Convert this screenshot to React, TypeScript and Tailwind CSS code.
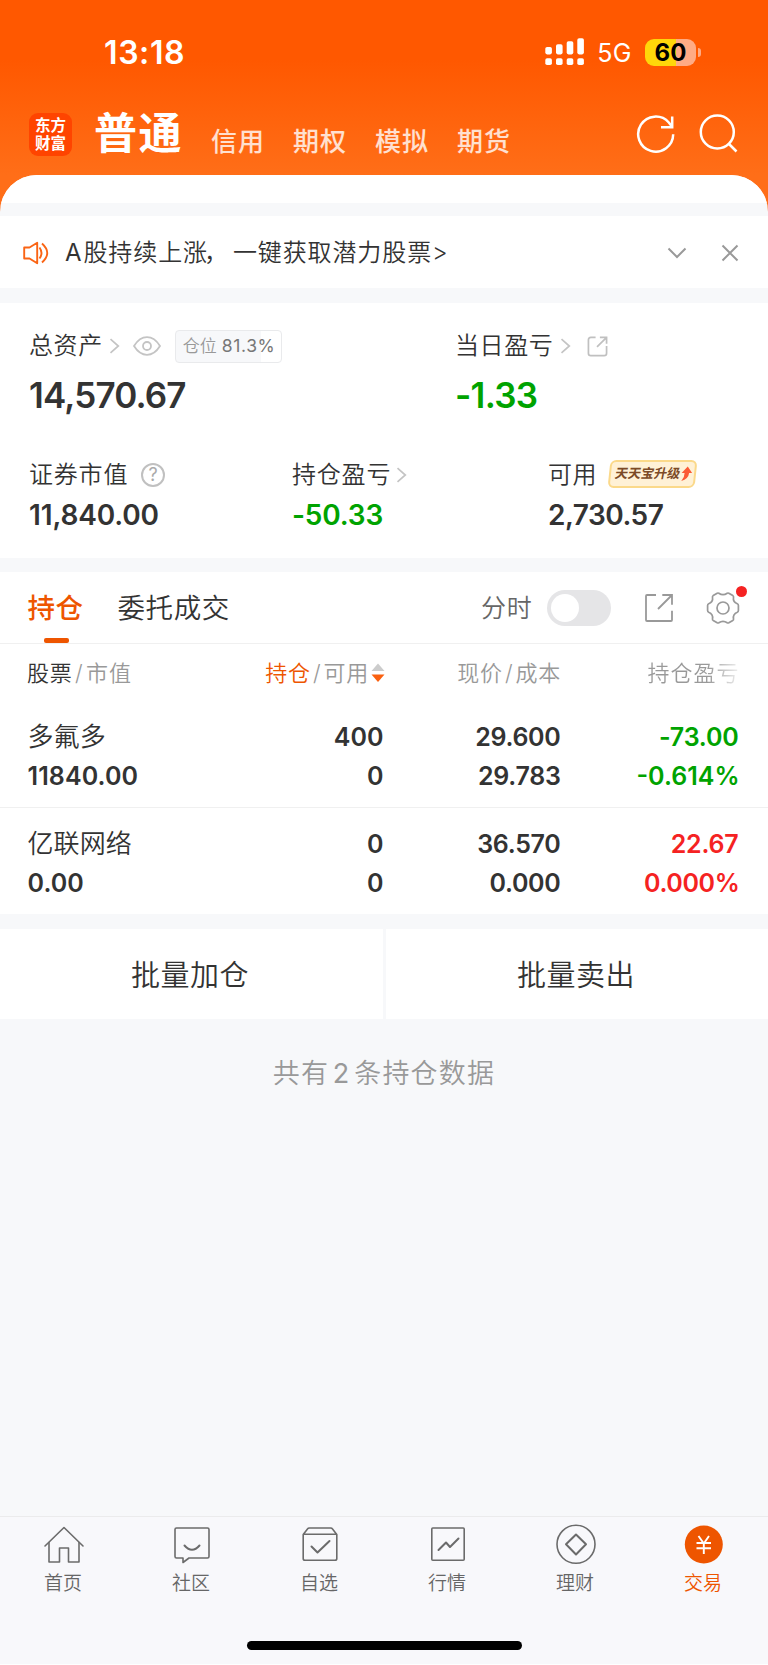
import React from "react";

const FONT = "font-['Inter','Noto_Sans_CJK_SC',sans-serif]";

function Chevron({ className = "" }: { className?: string }) {
  return (
    <svg className={className} width="11" height="16" viewBox="0 0 11 16" fill="none" stroke="#c4c4c4" strokeWidth="1.7">
      <path d="M1.5 1.2 9.3 8 1.5 14.8" />
    </svg>
  );
}

function Signal() {
  return (
    <svg width="40" height="28" viewBox="0 0 40 28" fill="#fff">
      <rect x="0.3" y="9" width="6.6" height="7.4" rx="1.8" />
      <rect x="11" y="6.3" width="6.6" height="10.1" rx="1.8" />
      <rect x="21.7" y="3.3" width="6.6" height="13.1" rx="1.8" />
      <rect x="32.3" y="0.3" width="6.6" height="16.1" rx="1.8" />
      <rect x="0.3" y="20.2" width="6.6" height="6.8" rx="1.8" />
      <rect x="11" y="20.2" width="6.6" height="6.8" rx="1.8" />
      <rect x="21.7" y="20.2" width="6.6" height="6.8" rx="1.8" />
      <rect x="32.3" y="20.2" width="6.6" height="6.8" rx="1.8" />
    </svg>
  );
}

function RefreshIcon({ className = "" }: { className?: string }) {
  return (
    <svg className={className} width="42" height="42" viewBox="0 0 42 42" fill="none" stroke="#fff" strokeWidth="2.5">
      <path d="M38.2 21.3A17.5 17.5 0 1 1 33.8 9.5L36.5 13" />
      <path d="M37.2 3.5V14.3H26" />
    </svg>
  );
}

function SearchIcon({ className = "" }: { className?: string }) {
  return (
    <svg className={className} width="42" height="42" viewBox="0 0 42 42" fill="none" stroke="#fff" strokeWidth="2.5">
      <circle cx="19.3" cy="19" r="16.5" />
      <path d="M30.5 30.5 38.5 38.5" />
    </svg>
  );
}

function SpeakerIcon({ className = "" }: { className?: string }) {
  return (
    <svg className={className} width="26" height="24" viewBox="0 0 26 24" fill="none" stroke="#fa6414" strokeWidth="1.9" strokeLinejoin="round">
      <path d="M1.2 6.5H6.5L14.2 1.8V22.2L6.5 17.5H1.2Z" />
      <path d="M16.5 6.5Q20.5 12 16.5 17.5M19 2.5Q29.5 12 19 21.5" />
    </svg>
  );
}

function EyeIcon({ className = "" }: { className?: string }) {
  return (
    <svg className={className} width="28" height="20" viewBox="0 0 28 20" fill="none" stroke="#c4c4c4" strokeWidth="1.8">
      <path d="M1 10Q6.5 1.2 14 1.2T27 10Q21.5 18.8 14 18.8T1 10Z" />
      <circle cx="14" cy="10" r="4" />
    </svg>
  );
}

function SmallShareIcon({ className = "" }: { className?: string }) {
  return (
    <svg className={className} width="21" height="21" viewBox="0 0 22 22" fill="none" stroke="#c0c0c0" strokeWidth="1.8">
      <path d="M9 1.5H4Q1.5 1.5 1.5 4V18Q1.5 20.5 4 20.5H18Q20.5 20.5 20.5 18V10.5" />
      <path d="M10.5 11.5 20.3 1.7M13.5 1.5H20.5V8" />
    </svg>
  );
}

function ShareIcon({ className = "" }: { className?: string }) {
  return (
    <svg className={className} width="30" height="30" viewBox="0 0 30 30" fill="none" stroke="#999" strokeWidth="1.8">
      <path d="M12 2H3Q2 2 2 3V27Q2 28 3 28H27Q28 28 28 27V17.7" />
      <path d="M14 16 27.5 2.5M18.3 2H28V11.7" />
    </svg>
  );
}

function GearIcon() {
  return (
    <svg width="34" height="34" viewBox="0 0 34 34" fill="none" stroke="#999" strokeWidth="1.7" strokeLinejoin="round">
      <path d="M12.8 2.2Q17 5.2 21.2 2.2Q22 1.8 22.8 2.2L26.8 4.6Q27.7 5.2 27.5 6.2Q26.7 11 31.3 12.8Q32.4 13.3 32.4 14.4V19.6Q32.4 20.7 31.3 21.2Q26.7 23 27.5 27.8Q27.7 28.8 26.8 29.4L22.8 31.8Q22 32.2 21.2 31.8Q17 28.8 12.8 31.8Q12 32.2 11.2 31.8L7.2 29.4Q6.3 28.8 6.5 27.8Q7.3 23 2.7 21.2Q1.6 20.7 1.6 19.6V14.4Q1.6 13.3 2.7 12.8Q7.3 11 6.5 6.2Q6.3 5.2 7.2 4.6L11.2 2.2Q12 1.8 12.8 2.2Z" />
      <circle cx="17" cy="17" r="6" />
    </svg>
  );
}

function UpgradeBadge({ className = "" }: { className?: string }) {
  return (
    <div className={`flex h-[28px] w-[87px] -skew-x-6 items-center rounded-[6px] border-2 border-[#fbd98a] bg-[#fff1d6] pl-[4px] ${className}`}>
      <span className="-skew-x-6 whitespace-nowrap text-[13px] font-bold text-[#7c4a26]">天天宝升级</span>
      <svg width="12" height="16" viewBox="0 0 12 16" fill="#fb5a35">
        <path d="M7 0.5 12 7H9Q9 13 2 15Q5 11 4.5 7H1.5Z" />
      </svg>
    </div>
  );
}

const rows = [
  { name: "多氟多", value: "11840.00", hold: "400", avail: "0", price: "29.600", cost: "29.783", pl: "-73.00", pct: "-0.614%", up: false },
  { name: "亿联网络", value: "0.00", hold: "0", avail: "0", price: "36.570", cost: "0.000", pl: "22.67", pct: "0.000%", up: true },
];

const navStroke = { fill: "none", stroke: "#6b6b6b", strokeWidth: 1.6, strokeLinejoin: "round" as const, strokeLinecap: "round" as const };

const tabs = [
  {
    label: "首页",
    icon: (
      <g {...navStroke}>
        <path d="M1 20 20 1.5 39 20" />
        <path d="M5 16.5V36H15.5V22H24.5V36H35V16.5" />
      </g>
    ),
  },
  {
    label: "社区",
    icon: (
      <g {...navStroke}>
        <path d="M4.5 2H35.5Q37 2 37 3.5V30.5Q37 32 35.5 32H17L11 36.5V32H4.5Q3 32 3 30.5V3.5Q3 2 4.5 2Z" />
        <path d="M12.5 19.5Q20 28 27.5 19.5" strokeWidth="2" />
      </g>
    ),
  },
  {
    label: "自选",
    icon: (
      <g {...navStroke}>
        <path d="M3.2 8.5 7.5 3Q8 2 9.5 2H30.5Q32 2 32.5 3L36.8 8.5V32.5Q36.8 34.3 35 34.3H5Q3.2 34.3 3.2 32.5ZM4 8.2H36" />
        <path d="M11.5 20.5 17.5 26.5 29.5 15" strokeWidth="2" />
      </g>
    ),
  },
  {
    label: "行情",
    icon: (
      <g {...navStroke}>
        <rect x="3.8" y="2" width="32.4" height="32.3" rx="1" />
        <path d="M10.5 24 18 16.5 22 21 30.5 12.5" strokeWidth="2" />
      </g>
    ),
  },
  {
    label: "理财",
    icon: (
      <g {...navStroke}>
        <circle cx="20" cy="18.3" r="19" />
        <path d="M20 8.5 30 18.3 20 28.5 10 18.3Z" strokeWidth="2" />
      </g>
    ),
  },
  {
    label: "交易",
    active: true,
    icon: (
      <g>
        <circle cx="19.8" cy="18.5" r="19" fill="#ee5500" />
        <path d="M14.5 10 19.8 17.5 25 10M19.8 17.5V28M12.5 17H27M12.5 22.3H27" fill="none" stroke="#fff" strokeWidth="1.9" />
      </g>
    ),
  },
];

export default function App() {
  return (
    <div lang="zh-CN" className={`flex h-[1665px] w-[768px] flex-col overflow-hidden bg-[#f7f8fa] font-[350] text-[#333] ${FONT}`}>
      <div className="bg-[linear-gradient(180deg,#ff5800_0px,#ff5800_60px,#ff6e18_175px,#ff6e18_216px)]">
        <div className="flex h-[104px] items-center text-white">
          <span className="ml-[104px] pt-px text-[32px] font-semibold tracking-[0.6px]">13:18</span>
          <div className="ml-auto flex items-center pr-[67px]">
            <Signal />
            <span className="ml-[12px] pt-[3px] text-[25px] font-normal tracking-[0.5px]">5G</span>
            <span className="ml-[13px] flex h-[27px] w-[51px] items-center justify-center rounded-[9px] bg-[linear-gradient(90deg,#ffd60a_60%,#ffab85_60%)] pt-px text-[24px] font-bold text-black">
              60
            </span>
            <span className="ml-[2px] h-[9px] w-[3px] rounded-r-full bg-[#ffab85]" />
          </div>
        </div>
        <div className="flex h-[71px] items-start pt-[1px] text-white">
          <div className="ml-[29px] mt-[8px] flex size-[43px] flex-col items-center justify-center rounded-[9px] bg-[#ff4400] text-[15.5px] font-bold leading-[18px]">
            <span>东方</span>
            <span>财富</span>
          </div>
          <span className="ml-[22px] text-[43px] font-bold leading-[57px] tracking-[1.5px]">普通</span>
          <div className="ml-[28px] flex gap-[28px] pt-[8px] text-[26px] font-medium leading-[57px] tracking-[1px] text-white/80">
            <span>信用</span>
            <span>期权</span>
            <span>模拟</span>
            <span>期货</span>
          </div>
          <RefreshIcon className="ml-auto mt-[8px]" />
          <SearchIcon className="ml-[21px] mr-[28px] mt-[8px]" />
        </div>
        <div className="flex h-[41px] flex-col overflow-hidden rounded-t-[37px] bg-[#f7f8fa]">
          <div className="h-[28px] bg-white" />
        </div>
      </div>

      <div className="flex h-[72px] items-center bg-white pt-px">
        <SpeakerIcon className="ml-[23px]" />
        <span className="ml-[16px] pt-px text-[24px] tracking-[0.9px]">
          <span className="mr-px font-normal">A</span>股持续上涨<span className="-ml-1 mr-1 font-['Noto_Sans_CJK_SC',sans-serif] leading-none">，</span>一键获取潜力股票&gt;
        </span>
        <svg className="ml-auto" width="20" height="12" viewBox="0 0 20 12" fill="none" stroke="#999" strokeWidth="2">
          <path d="M1.5 1.5 10 10 18.5 1.5" />
        </svg>
        <svg className="ml-[34px] mr-[29px]" width="18" height="18" viewBox="0 0 18 18" fill="none" stroke="#999" strokeWidth="2">
          <path d="M1.5 1.5 16.5 16.5M16.5 1.5 1.5 16.5" />
        </svg>
      </div>

      <div className="mt-[15px] h-[255px] bg-white pt-[25px]">
        <div className="flex">
          <div className="w-[427px] pl-[29px]">
            <div className="flex h-9 items-center">
              <span className="text-[24px] tracking-[0.6px]">总资产</span>
              <Chevron className="ml-[6px]" />
              <EyeIcon className="ml-[13px]" />
              <div className="ml-[14px] flex h-[33px] w-[107px] items-center rounded-[4px] border border-[#e9eaec] bg-[linear-gradient(90deg,#f7f8fa_81%,#fff_81%)] pl-[7px] pt-px">
                <span className="text-[17px] text-[#999]">仓位</span>
                <span className="ml-[5px] text-[17.5px] font-normal tracking-[0.6px] text-[#777]">81.3%</span>
              </div>
            </div>
            <div className="mt-[11px] h-10 text-[35px] font-semibold leading-10 tracking-[-0.85px]">14,570.67</div>
          </div>
          <div className="pl-[28px]">
            <div className="flex h-9 items-center">
              <span className="text-[24px] tracking-[0.6px]">当日盈亏</span>
              <Chevron className="ml-[7px]" />
              <SmallShareIcon className="ml-[16px]" />
            </div>
            <div className="mt-[11px] h-10 text-[35px] font-semibold leading-10 tracking-[-0.7px] text-[#00a300]">-1.33</div>
          </div>
        </div>
        <div className="mt-[44px] flex">
          <div className="w-[263px] pl-[29px]">
            <div className="flex h-[31px] items-center pt-px">
              <span className="text-[24px] tracking-[0.8px]">证券市值</span>
              <span className="ml-[13px] flex size-[24px] items-center justify-center rounded-full border-2 border-[#c0c0c0] text-[18px] font-normal leading-none text-[#aaa]">?</span>
            </div>
            <div className="mt-[9px] h-[31px] pt-px text-[28px] font-semibold leading-[30px] tracking-[-0.15px]">11,840.00</div>
          </div>
          <div className="w-[257px] pl-[29px]">
            <div className="flex h-[31px] items-center pt-px">
              <span className="text-[24px] tracking-[0.8px]">持仓盈亏</span>
              <Chevron className="ml-[5px]" />
            </div>
            <div className="mt-[9px] h-[31px] pt-px text-[28px] font-semibold leading-[30px] tracking-[-0.2px] text-[#00a300]">-50.33</div>
          </div>
          <div className="pl-[28px]">
            <div className="flex h-[31px] items-center pt-px">
              <span className="text-[24px] tracking-[0.6px]">可用</span>
              <UpgradeBadge className="mb-[3px] ml-[12px]" />
            </div>
            <div className="mt-[9px] h-[31px] pt-px text-[28px] font-semibold leading-[30px] tracking-[-0.5px]">2,730.57</div>
          </div>
        </div>
      </div>

      <div className="mt-[14px] flex h-[72px] items-center border-b border-[#f0f0f0] bg-white">
        <div className="relative ml-[27.5px] flex h-full items-center pt-[3px] text-[27.5px] font-medium tracking-[0.5px] text-[#ee5500]">
          持仓
          <span className="absolute bottom-0 left-[16px] h-[5px] w-[25px] rounded-[2px] bg-[#ee5500]" />
        </div>
        <span className="ml-[34px] pt-[3px] text-[27.5px] tracking-[0.6px]">委托成交</span>
        <span className="ml-auto pt-[3px] text-[25px] tracking-[0.8px] text-[#666]">分时</span>
        <div className="ml-[14.5px] flex h-9 w-[64px] items-center rounded-full bg-[#e5e5e7] pl-[4px]">
          <div className="size-[28px] rounded-full bg-white" />
        </div>
        <ShareIcon className="ml-[33px]" />
        <div className="relative ml-[32px] mr-[28px]">
          <GearIcon />
          <span className="absolute -top-[5px] left-[29.5px] size-[11px] rounded-full bg-[#f52222]" />
        </div>
      </div>

      <div className="grid h-[58px] shrink-0 grid-cols-[200px_156px_177px_178px] items-center bg-white pl-[27px] text-[22px] text-[#999]">
        <div className="tracking-[0.8px]">
          <span className="text-[#333]">股票</span>
          <span className="px-[2.5px]">/</span>市值
        </div>
        <div className="-mr-[1.5px] flex items-center justify-end tracking-[0.8px]">
          <span className="text-[#ee5500]">持仓</span>
          <span className="px-[2px]">/</span>可用
          <svg className="ml-[1.5px]" width="14" height="20" viewBox="0 0 14 20">
            <path d="M0.5 8 7 0.5 13.5 8Z" fill="#ccc" />
            <path d="M0.5 11.5 7 19 13.5 11.5Z" fill="#fa6010" />
          </svg>
        </div>
        <div className="-mr-px text-right tracking-[0.8px]">
          现价<span className="px-[2px]">/</span>成本
        </div>
        <div className="-mr-[1.5px] text-right tracking-[1px]">
          <span className="bg-[linear-gradient(90deg,#999_65%,#fff_105%)] bg-clip-text text-transparent">持仓盈亏</span>
        </div>
      </div>

      {rows.map((r, i) => (
        <div
          key={r.name}
          className={`grid h-[106px] shrink-0 grid-cols-[200px_156px_177px_178px] bg-white pl-[27.5px] text-right text-[25px] font-semibold leading-[38.5px] ${i === 0 ? "border-b border-[#f0f0f0] pt-4" : "pt-[17px]"}`}
        >
          <div className="text-left">
            <div className="text-[26px] font-[350] tracking-[0.1px]">{r.name}</div>
            <div className="tracking-[0.1px]">{r.value}</div>
          </div>
          <div>
            <div>{r.hold}</div>
            <div>{r.avail}</div>
          </div>
          <div className="tracking-[-0.3px]">
            <div>{r.price}</div>
            <div>{r.cost}</div>
          </div>
          <div className={r.up ? "text-[#f52222]" : "text-[#00a300]"}>
            <div className="tracking-[-0.2px]">{r.pl}</div>
            <div className={r.up ? "-mr-px tracking-[-0.35px]" : "-mr-px"}>{r.pct}</div>
          </div>
        </div>
      ))}

      <div className="mt-[15px] flex h-[90px] shrink-0 gap-[3px] text-[29px] tracking-[0.5px]">
        <div className="flex flex-1 items-center justify-center bg-white pr-[3px] pt-[3px]">批量加仓</div>
        <div className="flex flex-1 items-center justify-center bg-white pr-[2px] pt-[3px]">批量卖出</div>
      </div>
      <div className="mt-[34px] text-center text-[27px] leading-[41px] tracking-[1.2px] text-[#999]">
        共有<span className="inline-block w-[25px] text-center font-normal">2</span>条持仓数据
      </div>

      <div className="mt-auto flex h-[149px] shrink-0 flex-col border-b border-t border-b-white border-t-[#ebebec] bg-[#f8f8fb]">
        <div className="flex pt-[9px]">
          {tabs.map((t) => (
            <div key={t.label} className="flex w-32 flex-col items-center">
              <svg width="40" height="38" viewBox="0 0 40 38" className="overflow-visible">{t.icon}</svg>
              <span className={`mr-[2px] mt-[7px] text-[19px] leading-[25px] ${t.active ? "text-[#ee5500]" : "text-[#666]"}`}>{t.label}</span>
            </div>
          ))}
        </div>
        <div className="mx-auto mb-[14px] mt-auto h-[9px] w-[275px] rounded-full bg-black" />
      </div>
    </div>
  );
}
